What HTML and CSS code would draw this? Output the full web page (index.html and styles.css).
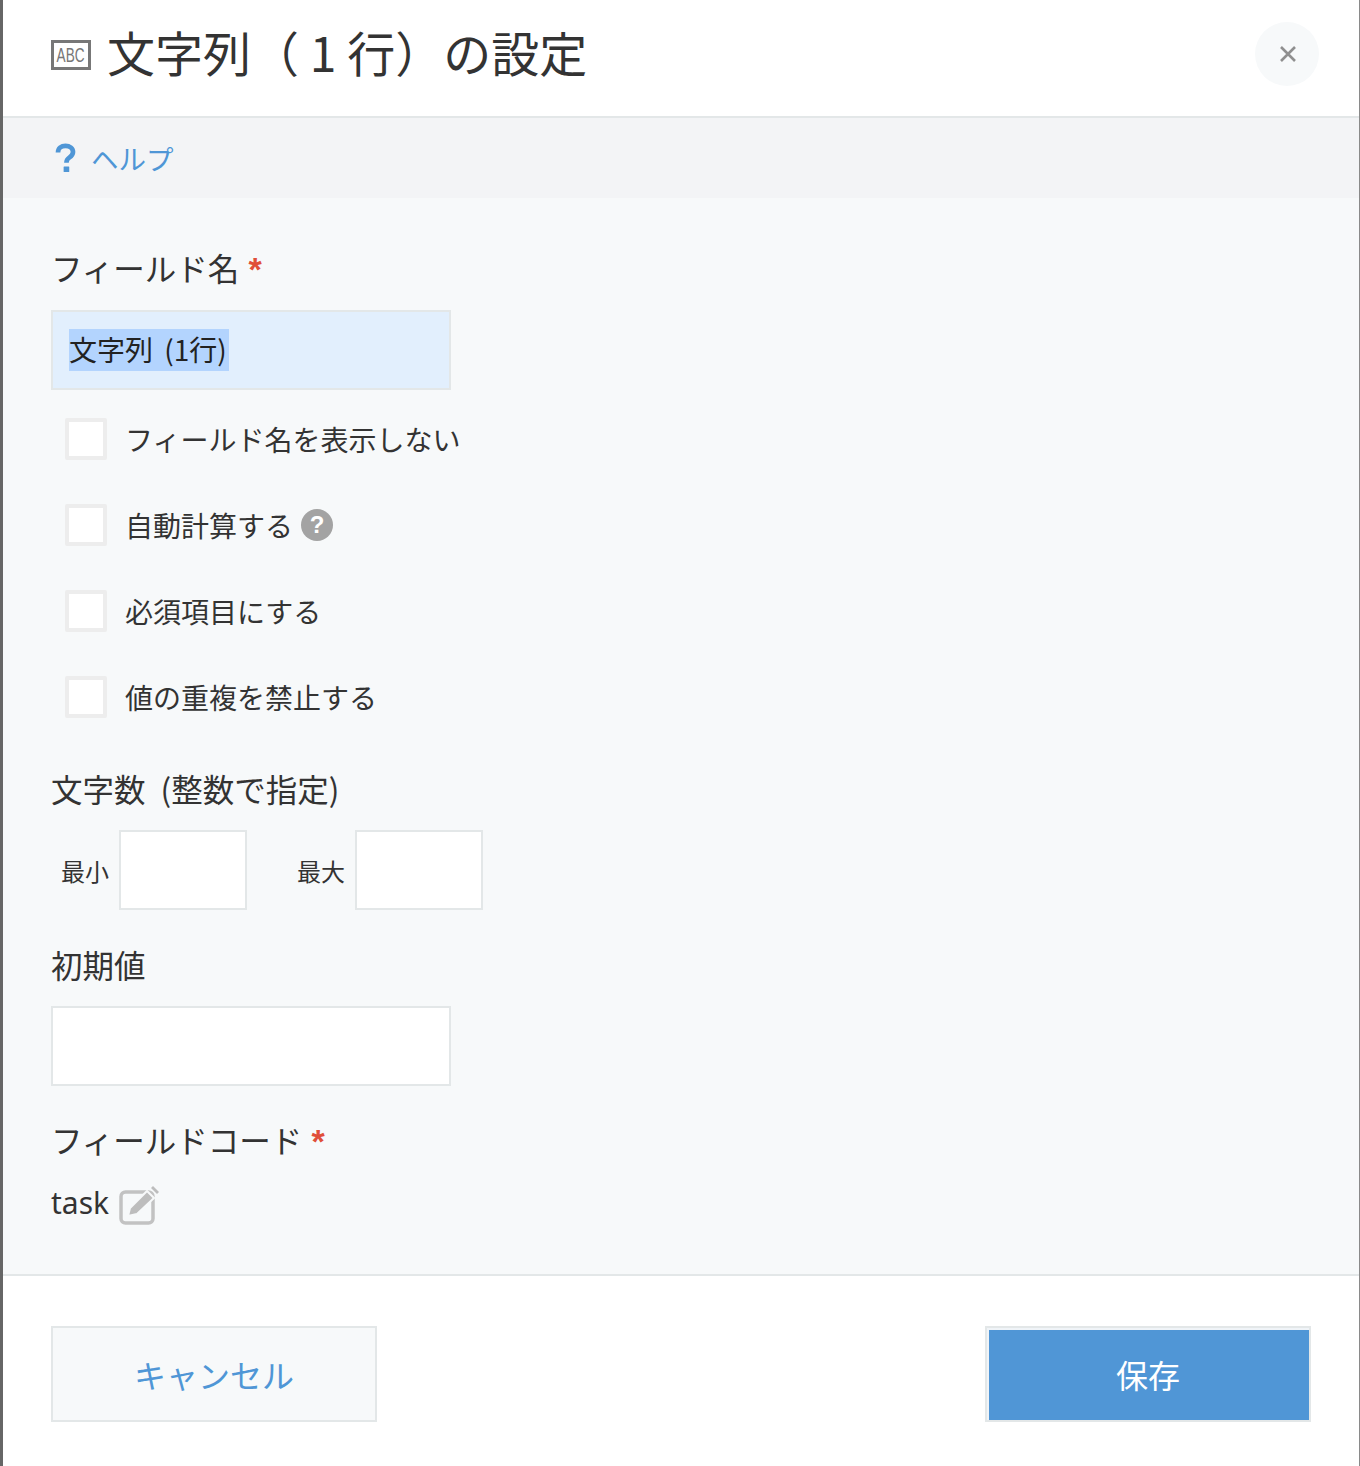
FILE: index.html
```html
<!DOCTYPE html>
<html lang="ja">
<head>
<meta charset="utf-8">
<title>文字列（1行）の設定</title>
<link rel="stylesheet" href="styles.css">
</head>
<body>
<div class="dialog">
  <header class="head">
    <div class="abc"><span class="abc-text">ABC</span></div>
    <h1 class="title">文字列（ 1 行）の設定</h1>
    <button class="close" type="button" aria-label="閉じる">
      <svg width="18" height="18" viewBox="0 0 18 18"><path d="M2 2 16 16M16 2 2 16" stroke="#8f8f8f" stroke-width="2.6" fill="none"/></svg>
    </button>
  </header>
  <div class="helpbar">
    <svg class="help-q" width="21" height="30" viewBox="0 0 22 32"><path d="M3 10C3 5.500 6.500 3 11 3s8 2.600 8 6.600c0 3-1.700 4.500-4 6-2.300 1.500-3 2.600-3 5.400" fill="none" stroke="#4f96d6" stroke-width="5"/><rect x="9" y="25" width="6" height="6" rx=".6" fill="#4f96d6"/></svg>
    <a class="help-link">ヘルプ</a>
  </div>
  <main class="body">
    <div class="label first">フィールド名<span class="req">*</span></div>
    <div class="input wide focused"><span class="sel">文字列 (1行)</span></div>
    <div class="checks">
      <div class="check"><span class="box"></span><span class="check-text">フィールド名を表示しない</span></div>
      <div class="check"><span class="box"></span><span class="check-text">自動計算する</span><span class="hint">?</span></div>
      <div class="check"><span class="box"></span><span class="check-text">必須項目にする</span></div>
      <div class="check"><span class="box"></span><span class="check-text">値の重複を禁止する</span></div>
    </div>
    <div class="label count">文字数 (整数で指定)</div>
    <div class="range">
      <div class="range-item"><span class="range-label">最小</span><div class="input small"></div></div>
      <div class="range-item"><span class="range-label">最大</span><div class="input small"></div></div>
    </div>
    <div class="label initial">初期値</div>
    <div class="input wide"></div>
    <div class="label code">フィールドコード<span class="req">*</span></div>
    <div class="code-row">
      <span class="code-text">task</span>
      <svg class="edit" width="40" height="40" viewBox="0 0 40 40">
        <rect x="2" y="7" width="32" height="31" rx="4.500" fill="none" stroke="#c2c2c2" stroke-width="3.500"/>
        <path d="M9 31 11 23 28 6 35 13 18 29Z" fill="#bdbdbd" stroke="#f7f9fa" stroke-width="2"/>
        <path d="M32 3 34 1 40 7 38 9Z" fill="#bdbdbd"/>
      </svg>
    </div>
  </main>
  <footer class="foot">
    <button class="btn cancel" type="button">キャンセル</button>
    <button class="btn save" type="button">保存</button>
  </footer>
</div>
</body>
</html>
```

FILE: styles.css
```css
* { box-sizing: border-box; }
html, body { margin: 0; padding: 0; background: #fff; }
body {
  font-family: "Noto Sans CJK JP", "Noto Sans", sans-serif;
  font-weight: 400;
  color: #333;
}
.dialog {
  width: 1360px;
  height: 1466px;
  border-left: 3px solid #666;
  border-right: 1px solid #8a8a8a;
  display: flex;
  flex-direction: column;
  background: #fff;
}
.head {
  height: 118px;
  flex: none;
  border-bottom: 2px solid #e3e7e8;
  display: flex;
  align-items: center;
  padding: 0 40px 8px 48px;
}
.abc {
  width: 40px;
  height: 30px;
  margin-top: 2px;
  border: 3px solid #777;
  display: flex;
  align-items: center;
  justify-content: center;
  flex: none;
}
.abc-text {
  font-family: "Liberation Sans", sans-serif;
  font-size: 20px;
  color: #777;
  transform: scaleX(.68);
  font-weight: 400;
}
.title {
  margin: 0 0 6px 16px;
  flex: 1;
  font-size: 48px;
  font-weight: 400;
  line-height: 60px;
  color: #333;
  white-space: nowrap;
}
.close {
  width: 64px;
  height: 64px;
  border: 0;
  padding: 0 0 0 2px;
  border-radius: 50%;
  background: #f7f9fa;
  display: flex;
  align-items: center;
  justify-content: center;
}
.helpbar {
  height: 80px;
  flex: none;
  background: #f3f4f6;
  display: flex;
  align-items: center;
  padding-left: 52px;
}
.help-q { flex: none; }
.help-link {
  margin-left: 15px;
  font-size: 27.500px;
  color: #4f96d6;
  line-height: 40px;
}
.body {
  flex: 1;
  background: #f7f9fa;
  border-bottom: 2px solid #e3e7e8;
  padding: 0 48px;
}
.label {
  font-size: 31.500px;
  line-height: 44px;
  color: #333;
  white-space: nowrap;
}
.label.first { margin-top: 47px; }
.label.count { margin-top: 48px; word-spacing: 8px; }
.label.initial { margin-top: 32px; }
.label.code { margin-top: 31px; }
.req {
  color: #e04f39;
  margin-left: 9px;
  font-size: 34px;
  line-height: 30px;
  font-weight: 700;
  font-family: "Liberation Sans", sans-serif;
}
.input {
  height: 80px;
  border: 2px solid #e3e7e8;
  background: #fff;
}
.input.wide { width: 400px; margin-top: 21px; }
.label.initial + .input.wide { margin-top: 20px; }
.input.small { width: 128px; }
.input.focused {
  background: #e2effd;
  display: flex;
  align-items: center;
  padding-left: 16px;
  font-size: 28px;
}
.sel {
  background: #b3d4fe;
  color: #222;
  height: 42px;
  line-height: 40px;
  width: 160px;
  white-space: nowrap;
  overflow: hidden;
  word-spacing: 5px;
}
.checks {
  margin-top: 28px;
  margin-left: 14px;
  display: flex;
  flex-direction: column;
  gap: 44px;
}
.check {
  display: flex;
  align-items: center;
  height: 42px;
}
.box {
  width: 42px;
  height: 42px;
  flex: none;
  background: #fff;
  border: 4px solid #ededed;
  border-radius: 2px;
}
.check-text {
  margin-left: 18px;
  font-size: 28px;
  line-height: 42px;
  white-space: nowrap;
  color: #333;
}
.hint {
  margin-left: 8px;
  width: 32px;
  height: 32px;
  border-radius: 50%;
  background: #a3a3a3;
  color: #fff;
  font-family: "Liberation Sans", sans-serif;
  font-weight: 700;
  font-size: 24px;
  line-height: 32px;
  text-align: center;
  flex: none;
}
.range {
  margin-top: 20px;
  display: flex;
  gap: 40px;
}
.range-item {
  display: flex;
  align-items: center;
}
.range-label {
  width: 68px;
  padding-left: 10px;
  font-size: 24px;
  white-space: nowrap;
}
.code-row {
  margin-top: 20px;
  display: flex;
  align-items: center;
  height: 44px;
}
.code-text {
  font-size: 30px;
  line-height: 44px;
  font-family: "Noto Sans", sans-serif;
  font-weight: 400;
}
.edit { margin: 3px 0 0 10px; flex: none; }
.foot {
  height: 190px;
  flex: none;
  display: flex;
  justify-content: space-between;
  align-items: flex-start;
  padding: 50px 48px 0;
}
.btn {
  height: 96px;
  font-family: inherit;
  font-weight: 400;
  font-size: 32px;
  padding: 0;
}
.cancel {
  width: 326px;
  background: #f7f9fa;
  border: 2px solid #e3e7e8;
  color: #4f96d6;
}
.save {
  width: 326px;
  background: #5096d6;
  border: 2px solid #e3e7e8;
  box-shadow: inset 2px 2px 0 #f0f4f8;
  color: #fff;
}
```
